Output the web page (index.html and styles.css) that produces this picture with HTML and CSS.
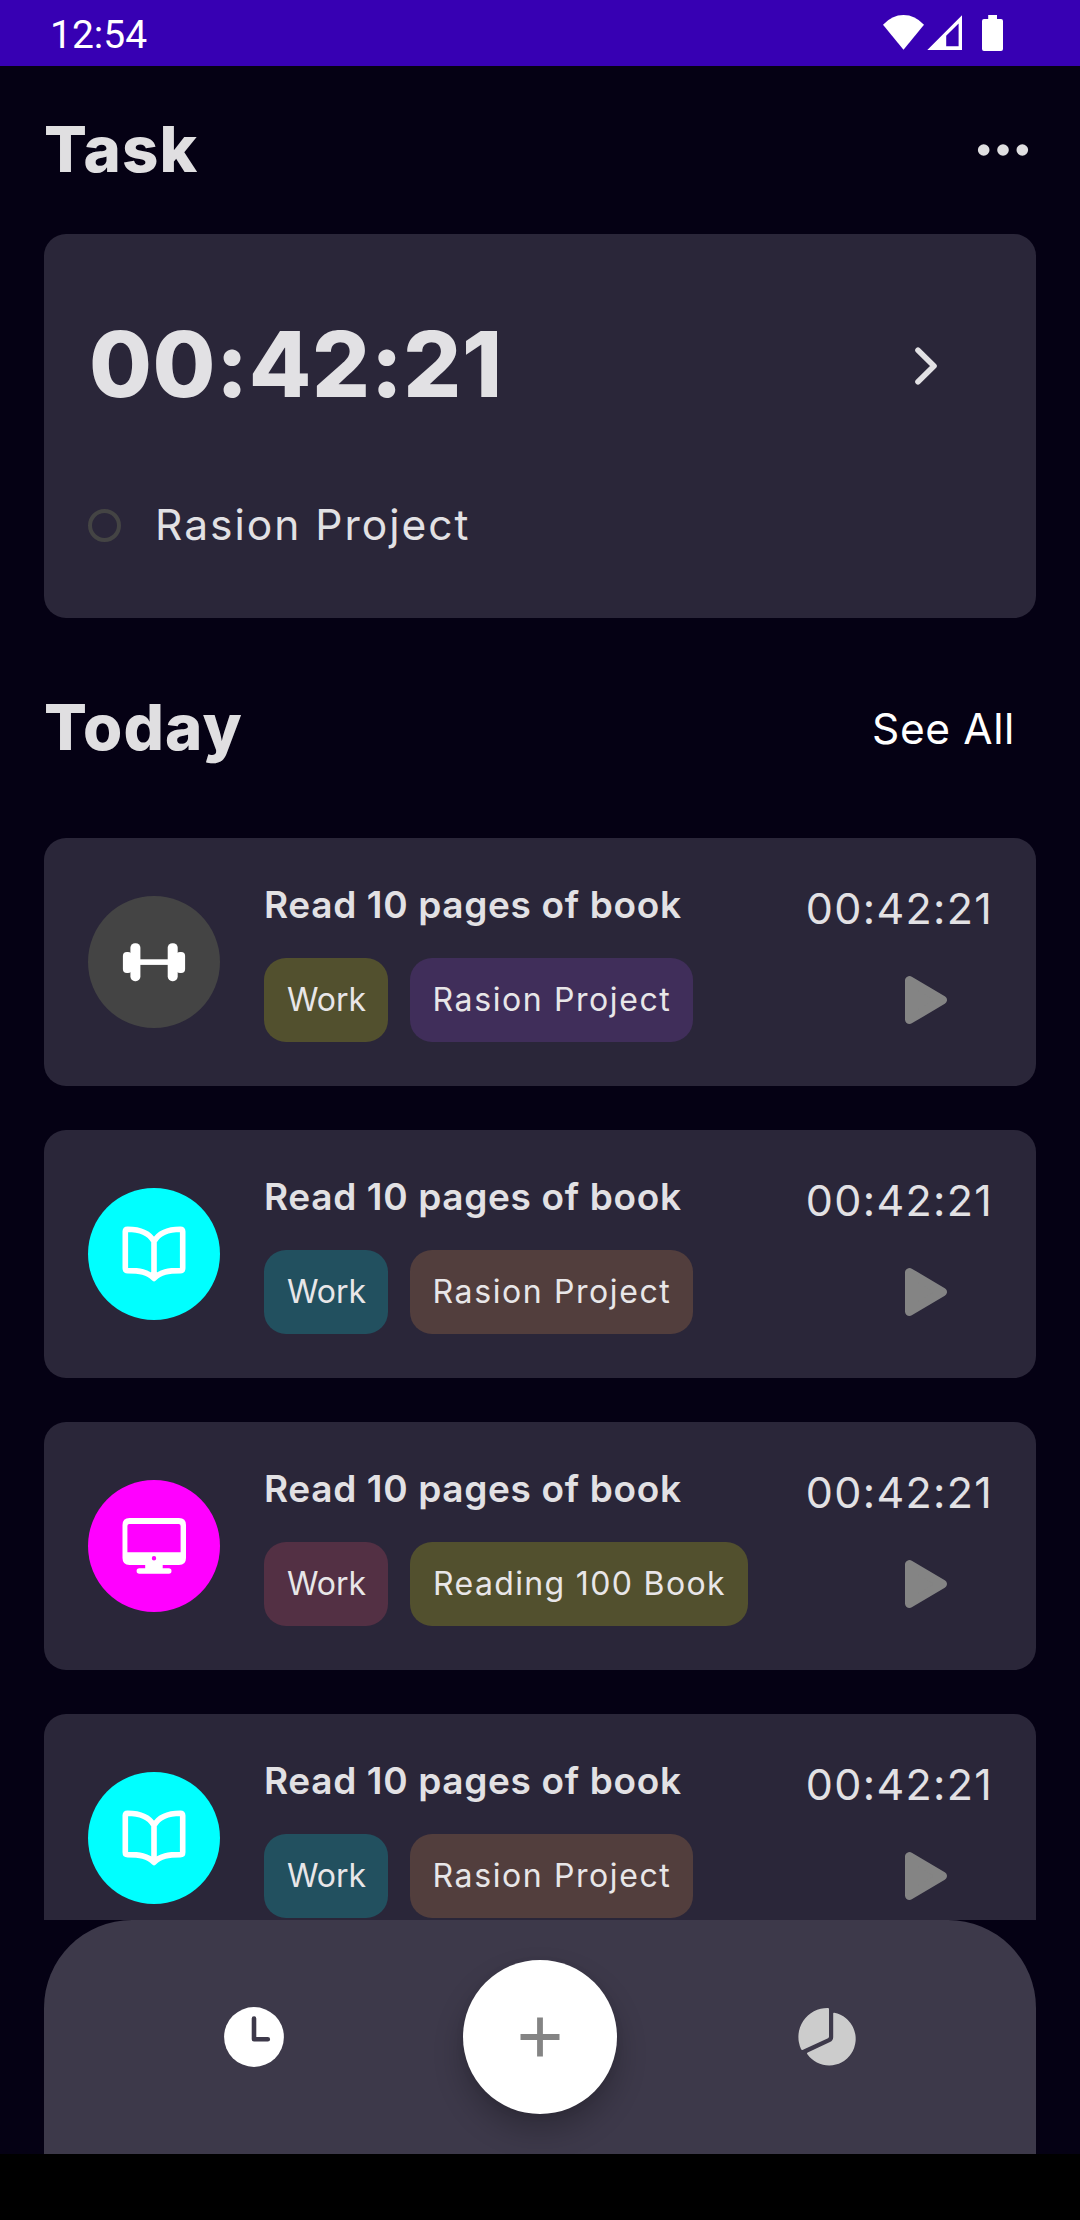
FILE: index.html
```html
<!DOCTYPE html>
<html lang="en">
<head>
<meta charset="utf-8">
<title>Task</title>
<link rel="stylesheet" href="styles.css">
</head>
<body>
<svg class="defs" aria-hidden="true">
  <symbol id="dumbbell" viewBox="0 0 66 66">
    <g fill="#fff"><rect x="1.9" y="22.9" width="9" height="21" rx="4"/><rect x="9.4" y="14.2" width="10" height="38" rx="4.6"/><rect x="17" y="30.3" width="32" height="5.6"/><rect x="46.7" y="14.2" width="10" height="38" rx="4.6"/><rect x="55.1" y="22.9" width="9" height="21" rx="4"/></g>
  </symbol>
  <symbol id="book" viewBox="0 0 66 66">
    <path d="M33 20.500C28 11.500 18 8.200 6.600 8.200Q4.300 8.200 4.300 10.600V47.200Q4.300 49.600 6.600 49.600C18 49.600 27 50.600 33 57.500C39 50.600 48 49.600 59.400 49.600Q61.700 49.600 61.700 47.200V10.600Q61.700 8.200 59.400 8.200C48 8.200 38 11.500 33 20.500V57" fill="none" stroke="#fff" stroke-width="5.600" stroke-linejoin="round"/>
  </symbol>
  <symbol id="monitor" viewBox="0 0 66 66">
    <path fill="#fff" fill-rule="evenodd" d="M8.500 5H58Q65 5 65 12V45Q65 52 58 52H41.700V55.200H47.700Q50.500 55.200 50.500 58T47.700 60.700H18.400Q15.600 60.700 15.600 58T18.400 55.200H24.200V52H8.500Q1.500 52 1.500 45V12Q1.500 5 8.500 5ZM8.300 11Q6.400 11 6.400 13V39.300H59.600V13Q59.600 11 57.700 11ZM35.200 45.200A2.200 2.200 0 1 0 30.800 45.200A2.200 2.200 0 1 0 35.200 45.200Z"/>
  </symbol>
  <symbol id="play" viewBox="0 0 66 66">
    <path d="M16.500 13.500V52.500L49.500 33Z" fill="#848484" stroke="#848484" stroke-width="9" stroke-linejoin="round"/>
  </symbol>
</svg>
<div class="app">
  <div class="status-bar">
    <span class="status-time">12:54</span>
    <svg class="status-icons" width="122" height="40" viewBox="882 13 122 40" fill="#fff">
      <path d="M883 24.700Q892 15 903.500 15T924 24.700L903.500 49.700Z"/>
      <path fill-rule="evenodd" d="M927.300 50L962 15.200V50ZM946.200 35.700V46.200H958.600V23.500Z"/>
      <path d="M988.200 15H997V19H1001Q1003 19 1003 21V49Q1003 51 1001 51H984Q982 51 982 49V21Q982 19 984 19H988.200Z"/>
    </svg>
  </div>
  <header class="header">
    <h1 class="heading">Task</h1>
    <svg width="66" height="66" viewBox="0 0 66 66" fill="#e0dfe1"><circle cx="13.700" cy="33" r="5.800"/><circle cx="33" cy="33" r="5.800"/><circle cx="52.300" cy="33" r="5.800"/></svg>
  </header>
  <section class="timer-card">
    <div class="timer-row">
      <span class="timer">00:42:21</span>
      <svg width="66" height="66" viewBox="0 0 66 66"><path d="M25 17.300L41 33L25 48.700" fill="none" stroke="#e2e1e4" stroke-width="5.600" stroke-linecap="round" stroke-linejoin="round"/></svg>
    </div>
    <div class="project-row"><span class="ring"></span><span class="project">Rasion Project</span></div>
  </section>
  <div class="section-head">
    <h2 class="heading">Today</h2>
    <span class="see-all">See All</span>
  </div>
  <main class="list">
    <article class="task">
      <div class="badge badge-gray"><svg class="icon"><use href="#dumbbell"/></svg></div>
      <div class="body">
        <div class="title">Read 10 pages of book</div>
        <div class="tags"><span class="tag tag-work olive">Work</span><span class="tag tag-rasion purple">Rasion Project</span></div>
      </div>
      <div class="side"><span class="time">00:42:21</span><svg class="icon play"><use href="#play"/></svg></div>
    </article>
    <article class="task">
      <div class="badge badge-cyan"><svg class="icon"><use href="#book"/></svg></div>
      <div class="body">
        <div class="title">Read 10 pages of book</div>
        <div class="tags"><span class="tag tag-work teal">Work</span><span class="tag tag-rasion brown">Rasion Project</span></div>
      </div>
      <div class="side"><span class="time">00:42:21</span><svg class="icon play"><use href="#play"/></svg></div>
    </article>
    <article class="task">
      <div class="badge badge-magenta"><svg class="icon"><use href="#monitor"/></svg></div>
      <div class="body">
        <div class="title">Read 10 pages of book</div>
        <div class="tags"><span class="tag tag-work wine">Work</span><span class="tag tag-reading olive">Reading 100 Book</span></div>
      </div>
      <div class="side"><span class="time">00:42:21</span><svg class="icon play"><use href="#play"/></svg></div>
    </article>
    <article class="task">
      <div class="badge badge-cyan"><svg class="icon"><use href="#book"/></svg></div>
      <div class="body">
        <div class="title">Read 10 pages of book</div>
        <div class="tags"><span class="tag tag-work teal">Work</span><span class="tag tag-rasion brown">Rasion Project</span></div>
      </div>
      <div class="side"><span class="time">00:42:21</span><svg class="icon play"><use href="#play"/></svg></div>
    </article>
  </main>
  <nav class="nav">
    <svg class="icon" viewBox="0 0 66 66"><circle cx="33" cy="33" r="29.900" fill="#fff"/><path d="M33 14.600V35.300H46.800" fill="none" stroke="#3d394a" stroke-width="4.600" stroke-linecap="round" stroke-linejoin="round"/></svg>
    <div class="fab"><svg class="icon" viewBox="0 0 66 66"><path d="M33 13.500V52.500M13.500 33H52.500" stroke="#848484" stroke-width="5.800"/></svg></div>
    <svg class="icon" viewBox="0 0 66 66" fill="#ccc"><path d="M35 4Q36 4 36 5V32.500Q36 33.700 35 34.200L10 45.800Q8.600 46.500 8 45A29 29 0 0 1 35 4Z"/><path d="M40.200 9.500Q40.200 8.500 41.300 8.800A26.600 26.600 0 1 1 14.200 50Q13.500 49 14.700 48.400L37 38.100Q40.200 36.500 40.200 33Z"/></svg>
  </nav>
  <div class="system-bar"></div>
</div>
</body>
</html>
```
FILE: styles.css
```css
* { box-sizing: border-box; }

body {
  margin: 0;
  background: #050114;
  color: #e2e1e4;
  font-family: Inter, "Liberation Sans", sans-serif;
}

.defs { display: none; }
svg { display: block; flex: none; }
.icon { width: 66px; height: 66px; }

.app {
  display: flex;
  flex-direction: column;
  width: 1080px;
  height: 2220px;
  overflow: hidden;
  white-space: nowrap;
}

.status-bar {
  display: flex;
  align-items: center;
  justify-content: space-between;
  flex: none;
  height: 66px;
  padding: 0 76px 0 50px;
  background: #3700b3;
}
.status-time {
  color: #fff;
  font: 400 39px/66px Roboto, sans-serif;
  padding-top: 3px;
}

.header, .section-head {
  display: flex;
  align-items: center;
  justify-content: space-between;
  flex: none;
  padding: 0 44px;
}
.header { height: 168px; }
.section-head { height: 220px; padding-right: 65px; }

.heading {
  margin: 0;
  padding-bottom: 2px;
  color: #e0dfe1;
  font-size: 63.500px;
  font-weight: 800;
  letter-spacing: 1.100px;
  line-height: 80px;
}
.see-all {
  color: #fff;
  font-size: 42.500px;
  letter-spacing: 0.600px;
  line-height: 54px;
  padding-top: 2px;
}

.timer-card {
  flex: none;
  height: 384px;
  margin: 0 44px;
  padding: 0 77px 0 44px;
  border-radius: 22px;
  background: #2a2639;
}
.timer-row {
  display: flex;
  align-items: center;
  justify-content: space-between;
  height: 264px;
}
.timer {
  padding: 0 0 4px 1px;
  font-size: 91px;
  font-weight: 800;
  letter-spacing: 0.600px;
  line-height: 110px;
}
.project-row { display: flex; align-items: center; gap: 34px; height: 54px; }
.ring { width: 33px; height: 33px; border: 4px solid #444; border-radius: 50%; }
.project { font-size: 42.500px; letter-spacing: 2px; line-height: 54px; }

.list {
  display: flex;
  flex-direction: column;
  flex: 1;
  gap: 44px;
  min-height: 0;
  padding: 0 44px;
  overflow: hidden;
}
.task {
  display: flex;
  align-items: center;
  flex: none;
  height: 248px;
  padding: 44px;
  border-radius: 22px;
  background: #2a2639;
}
.badge {
  display: grid;
  place-items: center;
  width: 132px;
  height: 132px;
  margin-right: 44px;
  border-radius: 50%;
}
.badge-gray { background: #444; }
.badge-cyan { background: #0ff; }
.badge-magenta { background: #f0f; }

.body, .side {
  display: flex;
  flex-direction: column;
  justify-content: space-between;
  height: 160px;
}
.body { flex: 1; }
.side { align-items: flex-end; }
.title { font-size: 37px; font-weight: 600; letter-spacing: 0.660px; line-height: 45px; }
.tags { display: flex; gap: 22px; }
.tag {
  height: 84px;
  padding-left: 1px;
  border-radius: 22px;
  font-size: 32px;
  line-height: 84px;
  text-align: center;
  color: #e8e6e8;
}
.tag-work { width: 124px; }
.tag-rasion { width: 283px; letter-spacing: 1.600px; }
.tag-reading { width: 338px; letter-spacing: 1.350px; }
.olive { background: #52502e; }
.purple { background: #402e5a; }
.teal { background: #22505f; }
.brown { background: #523e3d; }
.wine { background: #533044; }
.time { font-size: 43px; letter-spacing: 1.300px; line-height: 53px; margin-right: -1px; }
.play { margin: 0 33px 9px 0; }

.nav {
  display: flex;
  align-items: center;
  justify-content: space-between;
  flex: none;
  height: 234px;
  margin: 0 44px;
  padding: 0 177px;
  border-radius: 88px 88px 0 0;
  background: #3d394a;
  overflow: hidden;
}
.fab {
  display: grid;
  place-items: center;
  width: 154px;
  height: 154px;
  border-radius: 50%;
  background: #fff;
  box-shadow: 0 16px 30px rgba(0, 0, 0, 0.24), 0 2px 8px rgba(0, 0, 0, 0.06);
}
.system-bar { flex: none; height: 66px; background: #000; }
```
